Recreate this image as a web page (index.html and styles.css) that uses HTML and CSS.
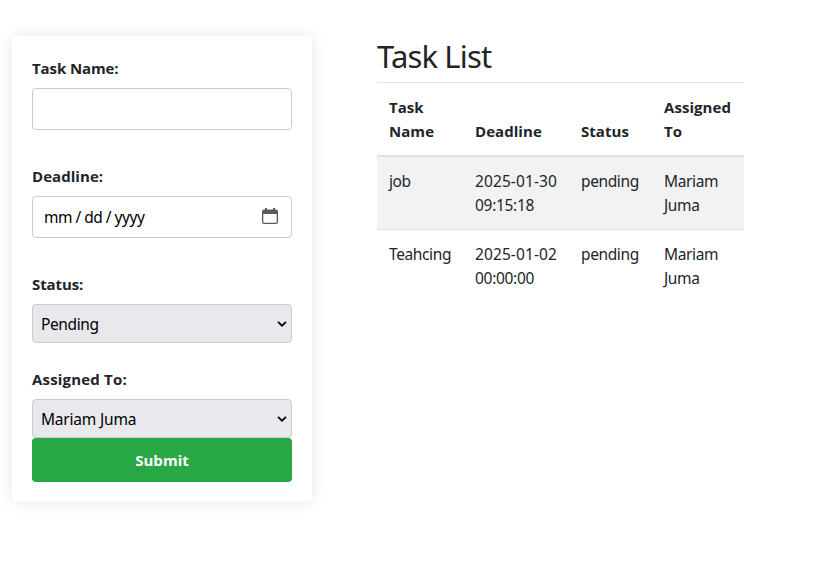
FILE: index.html
```html
<!DOCTYPE html>
<html lang="en">
<head>
<meta charset="utf-8">
<title>Task List</title>
<link rel="stylesheet" href="styles.css">
</head>
<body>
<main class="layout">
  <form class="task-form">
    <div class="field field-input">
      <label class="tight" for="name">Task Name:</label>
      <input class="control" id="name" type="text">
    </div>
    <div class="field field-input">
      <label>Deadline:</label>
      <div class="control date">
        <span class="date-text"><span>mm</span><span>/</span><span>dd</span><span>/</span><span>yyyy</span></span>
        <svg width="16" height="16" viewBox="0 0 16 16"><path fill="#5b5b5b" fill-rule="evenodd" d="M3 0h2v1.500h6V0h2v1.500h1a2 2 0 0 1 2 2V14a2 2 0 0 1-2 2H2a2 2 0 0 1-2-2V3.500a2 2 0 0 1 2-2h1zM1.300 6v8q0 .8.8.8h11.800q.8 0 .8-.8V6z"/></svg>
      </div>
    </div>
    <div class="field field-status">
      <label class="tight">Status:</label>
      <div class="select"><span>Pending</span><svg width="10" height="6" viewBox="0 0 10 6"><path d="M1 .8 5 4.700 9 .8" fill="none" stroke="#000" stroke-width="1.700"/></svg></div>
    </div>
    <div class="field">
      <label class="wide">Assigned To:</label>
      <div class="select"><span class="assignee">Mariam Juma</span><svg width="10" height="6" viewBox="0 0 10 6"><path d="M1 .8 5 4.700 9 .8" fill="none" stroke="#000" stroke-width="1.700"/></svg></div>
    </div>
    <button class="submit" type="button">Submit</button>
  </form>
  <section class="tasks">
    <h2>Task List</h2>
    <table>
      <colgroup><col class="c1"><col class="c2"><col class="c3"><col class="c4"></colgroup>
      <thead>
        <tr><th>Task<br>Name</th><th>Deadline</th><th>Status</th><th>Assigned<br>To</th></tr>
      </thead>
      <tbody>
        <tr><td>job</td><td class="num">2025-01-30<br><span class="time">09:15:18</span></td><td>pending</td><td>Mariam<br>Juma</td></tr>
        <tr><td>Teahcing</td><td class="num">2025-01-02<br><span class="time">00:00:00</span></td><td>pending</td><td>Mariam<br>Juma</td></tr>
      </tbody>
    </table>
  </section>
</main>
</body>
</html>
```
FILE: styles.css
```css
* { box-sizing: border-box; }
body {
  margin: 0;
  min-height: 561px;
  background: #fff;
  color: #212529;
  font: 15.5px/24px "Noto Sans", "Open Sans", sans-serif;
  letter-spacing: -.38px;
}
.layout {
  display: flex;
  align-items: flex-start;
  gap: 65px;
  min-height: 561px;
  padding: 36px 0 0 12px;
}
.task-form {
  width: 300px;
  height: 466px;
  padding: 20px;
  border-radius: 5px;
  background: #fff;
  box-shadow: 0 0 15px rgba(0, 0, 0, .1);
}
.field-input { margin-bottom: 34px; }
.field-status { margin-bottom: 24px; }
label, th, .submit { font-family: "Open Sans", sans-serif; font-size: 15px; font-weight: 700; letter-spacing: .05px; }
label { display: block; margin-bottom: 8px; }
.tight { letter-spacing: -.1px; }
.wide { letter-spacing: .18px; }
.control {
  display: flex;
  align-items: center;
  width: 100%;
  height: 42px;
  padding: 0 13px 0 11px;
  border: 1px solid #ccc;
  border-radius: 4px;
  background: #fff;
  color: #000;
  font: inherit;
}
.date { justify-content: space-between; }
.date svg { margin-bottom: 2px; }
.date-text { display: flex; gap: 3.3px; }
.select {
  display: flex;
  align-items: center;
  justify-content: space-between;
  height: 39px;
  padding: 1px 4px 0 8px;
  border: 1px solid #ccc;
  border-radius: 4px;
  background: #e9e9ed;
  color: #000;
}
.assignee { letter-spacing: -.2px; }
.submit {
  display: block;
  width: 100%;
  height: 44px;
  padding: 0;
  border: 0;
  border-radius: 4px;
  background: #28a745;
  color: #fff;
  line-height: 24px;
}
.tasks { width: 367px; }
h2 {
  margin: 0 0 7px;
  padding-top: 1px;
  font-size: 31px;
  font-weight: 400;
  line-height: 38px;
  letter-spacing: -.85px;
}
table { width: 100%; table-layout: fixed; border-collapse: separate; border-spacing: 0; }
.c1 { width: 86px; }
.c2 { width: 106px; }
.c3 { width: 83px; }
.c4 { width: 92px; }
th, td { padding: 12px 0 12px 12px; border-top: 1px solid #dee2e6; text-align: left; vertical-align: top; white-space: nowrap; }
th { vertical-align: bottom; border-bottom: 2px solid #dee2e6; }
tbody tr:first-child { background: #f2f2f2; }
tbody tr:first-child td { border-top: 0; }
.num { letter-spacing: .1px; }
.time { letter-spacing: -.3px; }
```
